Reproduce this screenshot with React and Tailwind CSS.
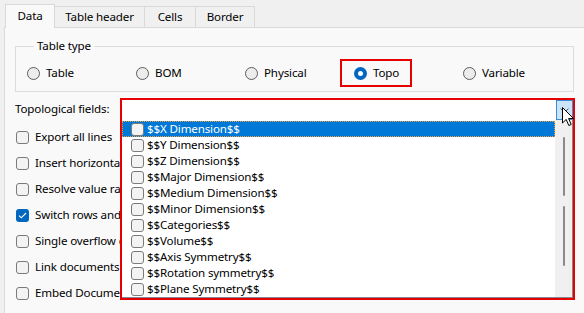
import React from 'react'

const fields = [
  '$$X Dimension$$',
  '$$Y Dimension$$',
  '$$Z Dimension$$',
  '$$Major Dimension$$',
  '$$Medium Dimension$$',
  '$$Minor Dimension$$',
  '$$Categories$$',
  '$$Volume$$',
  '$$Axis Symmetry$$',
  '$$Rotation symmetry$$',
  '$$Plane Symmetry$$',
]

const options = [
  { label: 'Export all lines', checked: false },
  { label: 'Insert horizontal lines', checked: false },
  { label: 'Resolve value ranges', checked: false },
  { label: 'Switch rows and columns', checked: true },
  { label: 'Single overflow column', checked: false },
  { label: 'Link documents to table', checked: false },
  { label: 'Embed Documents', checked: false },
]

const types = ['Table', 'BOM', 'Physical', 'Topo', 'Variable']

function Radio({ on }) {
  if (on) {
    return (
      <span className="w-[13px] h-[13px] rounded-full bg-[#0067c0] flex items-center justify-center shrink-0">
        <span className="w-[5px] h-[5px] rounded-full bg-white" />
      </span>
    )
  }
  return <span className="w-[13px] h-[13px] rounded-full border border-[#5d5d5d] bg-[#ececec] shrink-0" />
}

function Check({ on }) {
  if (on) {
    return (
      <span className="w-[13px] h-[13px] rounded-[3px] bg-[#0067c0] flex items-center justify-center shrink-0">
        <svg width="9" height="7" viewBox="0 0 9 7" fill="none">
          <path d="M1 3.6 L3.3 5.8 L8 1" stroke="white" strokeWidth="1.1" />
        </svg>
      </span>
    )
  }
  return <span className="w-[13px] h-[13px] rounded-[3px] border border-[#7a7a7a] bg-[#f3f3f3] shrink-0" />
}

export default function App() {
  return (
    <div className="w-[584px] h-[313px] overflow-hidden bg-[#f0f0f0] text-[11.6px] leading-[16px] tracking-[-0.15px] text-black font-['Segoe_UI','Noto_Sans',sans-serif]">
      {/* tabs */}
      <div className="flex items-end h-[27px] pl-[5px]">
        <div className="relative z-10 -mb-px h-[24px] w-[50px] border border-b-0 border-[#d9d9d9] bg-[#f9f9f9] flex items-center justify-center pb-[2px]">
          Data
        </div>
        {['Table header', 'Cells', 'Border'].map((t, i) => (
          <div
            key={t}
            className={`h-[21px] border-t border-r border-[#d9d9d9] bg-[#f0f0f0] flex items-center justify-center ${i === 0 ? 'w-[90px]' : i === 1 ? 'w-[51px]' : 'w-[59px]'}`}
          >
            {t}
          </div>
        ))}
      </div>

      {/* page */}
      <div className="ml-[4px] h-[286px] border-t border-l border-[#d9d9d9] bg-[#f9f9f9] pl-[10px]">
        <fieldset className="mt-[10px] w-[559px] border border-[#dcdcdc] pl-[11px] pt-[5px] pb-[4px]">
          <legend className="ml-[7px] px-[3px]">Table type</legend>
          <div className="flex">
            {types.map(t => (
              <div key={t} className="relative w-[109px] h-[28px] flex items-center gap-[6px]">
                <Radio on={t === 'Topo'} />
                <span>{t}</span>
                {t === 'Topo' && (
                  <span className="absolute left-[-14px] top-0 w-[72px] h-[28px] border-2 border-[#e60000]" />
                )}
              </div>
            ))}
          </div>
        </fieldset>

        <div className="mt-[6px] flex items-center h-[22px]">
          <span className="w-[105px]">Topological fields:</span>
          <div className="relative w-[455px] h-[22px] border-2 border-b-0 border-[#e60000] bg-white flex justify-end">
            <div className="w-[17px] h-[20px] border border-[#3c8fd6] bg-[#cce4f7] flex items-center justify-center">
              <svg width="9" height="5" viewBox="0 0 9 5" fill="none">
                <path d="M0.5 0.5 L4.5 4.5 L8.5 0.5" stroke="#555" />
              </svg>
            </div>

            {/* open list */}
            <div className="absolute z-20 top-full left-[-2px] w-[455px] h-[180px] border-2 border-t-0 border-[#e60000] bg-white">
              <div className="flex h-full border-r border-b border-[#828790]">
                <div className="w-[433px] pt-px">
                  {fields.map((f, i) => (
                    <div
                      key={f}
                      className={`h-[16px] flex items-center gap-[3px] pl-[9px] ${i === 0 ? 'bg-[#0078d7] text-white outline-1 outline-dotted outline-[#f0a040] -outline-offset-1' : ''}`}
                    >
                      <Check on={false} />
                      <span>{f}</span>
                    </div>
                  ))}
                </div>
                <div className="w-[17px] bg-[#f0f0f0] flex flex-col items-center pt-[17px] gap-[10px]">
                  <span className="w-[2px] h-[59px] rounded-full bg-[#8a8a8a]" />
                  <span className="w-[2px] h-[60px] rounded-full bg-[#8a8a8a]" />
                </div>
              </div>
            </div>

            {/* mouse pointer */}
            <svg className="absolute z-30 left-[440px] top-[7px]" width="13" height="20" viewBox="0 0 13 20">
              <path d="M0.5 0.5 L0.5 16 L4.2 12.4 L6.8 18.5 L9.2 17.5 L6.6 11.5 L11.5 11.5 Z" fill="white" stroke="black" strokeWidth="1" />
            </svg>
          </div>
        </div>

        <div className="mt-[4px] ml-px w-[104px] overflow-hidden">
          {options.map(o => (
            <div key={o.label} className="h-[26px] flex items-center gap-[6px] whitespace-nowrap">
              <Check on={o.checked} />
              <span>{o.label}</span>
            </div>
          ))}
        </div>
      </div>
    </div>
  )
}
